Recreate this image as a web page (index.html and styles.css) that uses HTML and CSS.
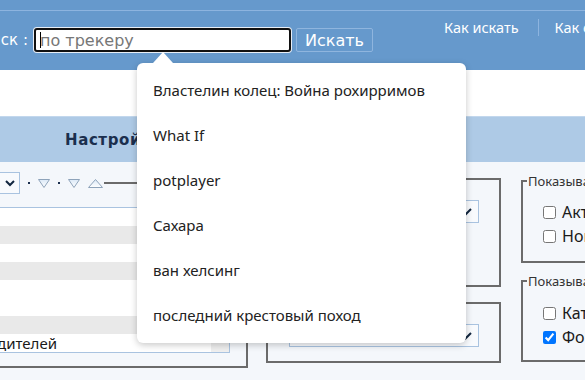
FILE: index.html
```html
<!DOCTYPE html>
<html lang="ru">
<head>
    <meta charset="UTF-8">
    <meta name="viewport" content="width=device-width, initial-scale=1.0">
    <title>Поиск</title>
    <link rel="stylesheet" href="styles.css">
</head>
<body>
    <div id="page">
        <div id="header">
            <div class="topline"></div>
            <div class="search-row">
                <label class="search-label" for="q">Поиск :</label>
                <div class="search-box">
                    <input id="q" class="search-input" type="text" placeholder="по трекеру">
                    <span class="caret"></span>
                    <ul class="suggest">
                        <li>Властелин колец: Война рохирримов</li>
                        <li>What If</li>
                        <li>potplayer</li>
                        <li>Сахара</li>
                        <li>ван хелсинг</li>
                        <li>последний крестовый поход</li>
                    </ul>
                </div>
                <button class="search-btn">Искать</button>
                <div class="links">
                    <a href="#">Как искать</a>
                    <span class="sep"></span>
                    <a href="#">Как скачать</a>
                </div>
            </div>
        </div>

        <div class="spacer"></div>

        <div class="band">
            <h2>Настройки поиска</h2>
        </div>

        <div class="options">
            <fieldset class="box cats">
                <legend class="cats-head">
                    <span class="fake-select"><svg width="10" height="7" viewBox="0 0 10 7"><path d="M1 1l4 4 4-4" fill="none" stroke="#12263f" stroke-width="2"/></svg></span>
                    <span class="dot"></span>
                    <svg class="tri" width="12" height="9" viewBox="0 0 12 9"><path d="M0.5 0.5h11L6 8.5z" fill="url(#g1)" stroke="#8ea3ba"/><defs><linearGradient id="g1" x1="0" y1="0" x2="0" y2="1"><stop offset="0" stop-color="#dbe9f7"/><stop offset="1" stop-color="#fff"/></linearGradient></defs></svg>
                    <span class="dot"></span>
                    <svg class="tri" width="12" height="9" viewBox="0 0 12 9"><path d="M0.5 0.5h11L6 8.5z" fill="url(#g1)" stroke="#8ea3ba"/></svg>
                    <svg class="tri up" width="15" height="9" viewBox="0 0 15 9"><path d="M0.5 8.5h14L7.5 0.5z" fill="url(#g1)" stroke="#8ea3ba"/></svg>
                </legend>
                <div class="listbox">
                    <div class="rows">
                        <div class="row"></div>
                        <div class="row alt"></div>
                        <div class="row"></div>
                        <div class="row alt"></div>
                        <div class="row"></div>
                        <div class="row"></div>
                        <div class="row alt"></div>
                        <div class="row">Фильмы для родителей</div>
                    </div>
                    <div class="scroll"><span class="scroll-dot"></span></div>
                </div>
            </fieldset>

            <div class="col mid">
                <fieldset class="box mid-box tall">
                    <legend>Упорядочить по</legend>
                    <span class="select"><svg width="13" height="8" viewBox="0 0 13 8"><path d="M1 1l5.5 5.5L12 1" fill="none" stroke="#12263f" stroke-width="2"/></svg></span>
                </fieldset>
                <fieldset class="box mid-box">
                    <legend>Торренты за</legend>
                    <span class="select"><svg width="13" height="8" viewBox="0 0 13 8"><path d="M1 1l5.5 5.5L12 1" fill="none" stroke="#12263f" stroke-width="2"/></svg></span>
                </fieldset>
            </div>

            <div class="col right">
                <fieldset class="box show-box">
                    <legend>Показывать</legend>
                    <label class="check"><input type="checkbox"> Активные</label>
                    <label class="check"><input type="checkbox"> Новые</label>
                </fieldset>
                <fieldset class="box show-box second">
                    <legend>Показывать колонки</legend>
                    <label class="check"><input type="checkbox"> Категория</label>
                    <label class="check"><input type="checkbox" checked> Форум</label>
                </fieldset>
            </div>
        </div>
    </div>
</body>
</html>
```

FILE: styles.css
```css
*{
    margin: 0;
    padding: 0;
    box-sizing: border-box;
}
html, body{
    width: 585px;
    height: 380px;
    overflow: hidden;
}
body{
    font-family: "Noto Sans", "DejaVu Sans", sans-serif;
    background: #f4f7fb;
    color: #1a1a1a;
}
li{
    list-style: none;
}

/* шапка */
#header{
    height: 70px;
    padding-top: 10px;
    background: #6699cc;
    position: relative;
    z-index: 5;
}
.topline{
    height: 1px;
    background: #8db4df;
}
.search-row{
    display: flex;
    align-items: flex-start;
    padding-top: 7px;
    font-family: "DejaVu Sans", sans-serif;
}
.search-row > *{
    flex-shrink: 0;
}
.search-label{
    width: 62px;
    margin-left: -34px;
    margin-top: 10px;
    text-align: right;
    color: #fff;
    font-size: 15px;
    line-height: 24px;
    white-space: nowrap;
}
.search-box{
    position: relative;
    margin-left: 6px;
    margin-top: 10px;
}
.search-input{
    display: block;
    width: 257px;
    height: 24px;
    border: 2px solid #111;
    border-radius: 3px;
    box-shadow: 0 0 0 1px #e8eef6;
    background: #fff;
    padding: 0 4px;
    font-family: "DejaVu Sans", sans-serif;
    font-size: 16px;
    outline: none;
}
.search-input::placeholder{
    color: #777;
}
.caret{
    position: absolute;
    left: 6px;
    top: 4px;
    width: 1px;
    height: 16px;
    background: #000;
}
.search-btn{
    margin-left: 5px;
    margin-top: 10px;
    width: 77px;
    height: 24px;
    background: #6699cc;
    border: 1px solid #8fb5de;
    border-radius: 2px;
    color: #fff;
    font-family: "DejaVu Sans", sans-serif;
    font-size: 16px;
}
.links{
    display: flex;
    align-items: center;
    margin-left: 71px;
    white-space: nowrap;
    font-family: "Noto Sans", sans-serif;
}
.links a{
    color: #fff;
    text-decoration: none;
    font-size: 14.5px;
    line-height: 18px;
}
.sep{
    width: 1px;
    height: 17px;
    background: #8db4df;
    margin: 0 16px 0 19px;
}

/* подсказки */
.suggest{
    position: absolute;
    left: 103px;
    top: 35px;
    width: 329px;
    padding: 5px 0;
    background: #fff;
    border-radius: 6px;
    box-shadow: 0 2px 7px rgba(0, 0, 0, 0.22);
    font-family: "Noto Sans", sans-serif;
    font-size: 15px;
    color: #222;
}
.suggest:before{
    content: "";
    position: absolute;
    left: 16px;
    top: -11px;
    border-left: 10px solid transparent;
    border-right: 10px solid transparent;
    border-bottom: 11px solid #fff;
}
.suggest li{
    height: 45px;
    line-height: 45px;
    padding-left: 16px;
    white-space: nowrap;
}

.spacer{
    height: 46px;
    background: #fff;
}
.band{
    height: 46px;
    background: #aecae6;
    border-top: 1px solid #c2d7ed;
    padding-left: 65px;
}
.band h2{
    font-family: "DejaVu Sans", sans-serif;
    font-size: 15px;
    font-weight: bold;
    color: #1b2f4e;
    line-height: 46px;
    letter-spacing: 0.6px;
    white-space: nowrap;
}

/* настройки */
.options{
    display: flex;
    align-items: flex-start;
    margin-left: -150px;
}
.options > *{
    flex-shrink: 0;
}
.box{
    border: 2px solid #6b6b6b;
    min-width: 0;
}
.box legend{
    font-size: 13px;
    line-height: 16px;
    padding: 0 1px;
    color: #333;
    white-space: nowrap;
}

.cats{
    width: 398px;
    margin-top: 10px;
    padding: 13px 16px 13px 8px;
}
.cats legend.cats-head{
    display: flex;
    align-items: center;
    height: 22px;
    padding: 0;
}
.fake-select{
    display: flex;
    align-items: center;
    justify-content: flex-end;
    width: 160px;
    height: 22px;
    border: 1px solid #a9c3e0;
    background: #f8fafd;
    padding-right: 4px;
}
.dot{
    width: 2px;
    height: 2px;
    background: #1b2f4e;
    margin: 0 8px;
}
.tri{
    display: block;
}
.tri.up{
    margin-left: 8px;
    margin-right: 1px;
}
.listbox{
    display: flex;
    border: 1px solid #a9c3e0;
    background: #fff;
}
.rows{
    flex: 1;
    min-width: 0;
}
.row{
    height: 18px;
    line-height: 18px;
    font-size: 15px;
    text-align: right;
    padding-right: 154px;
    white-space: nowrap;
    overflow: hidden;
}
.row.alt{
    background: #e9e9e9;
}
.scroll{
    width: 18px;
    background: #efefef;
    display: flex;
    align-items: flex-end;
    justify-content: center;
}
.scroll-dot{
    width: 2px;
    height: 2px;
    background: #555;
    margin-bottom: 9px;
}

.col{
    display: flex;
    flex-direction: column;
}
.mid{
    width: 235px;
    margin-left: 18px;
    margin-top: 9px;
    gap: 8px;
}
.mid-box{
    padding: 13px 20px 14px 21px;
}
.mid-box.tall{
    padding-bottom: 62px;
}
.mid-box legend{
    margin-left: 6px;
}
.select{
    display: flex;
    align-items: center;
    justify-content: flex-end;
    height: 23px;
    border: 1px solid #a9c3e0;
    background: #f8fafd;
    padding-right: 6px;
}

.right{
    width: 130px;
    margin-left: 20px;
    margin-top: 11px;
    gap: 10px;
}
.show-box{
    padding: 11px 0 13px 4px;
}
.show-box.second{
    padding-top: 12px;
    padding-bottom: 11px;
}
.check{
    display: flex;
    align-items: center;
    height: 24px;
    padding-left: 12px;
    font-size: 16px;
    white-space: nowrap;
}
.check input{
    margin: 0 6px 0 4px;
    width: 13px;
    height: 13px;
}
```
